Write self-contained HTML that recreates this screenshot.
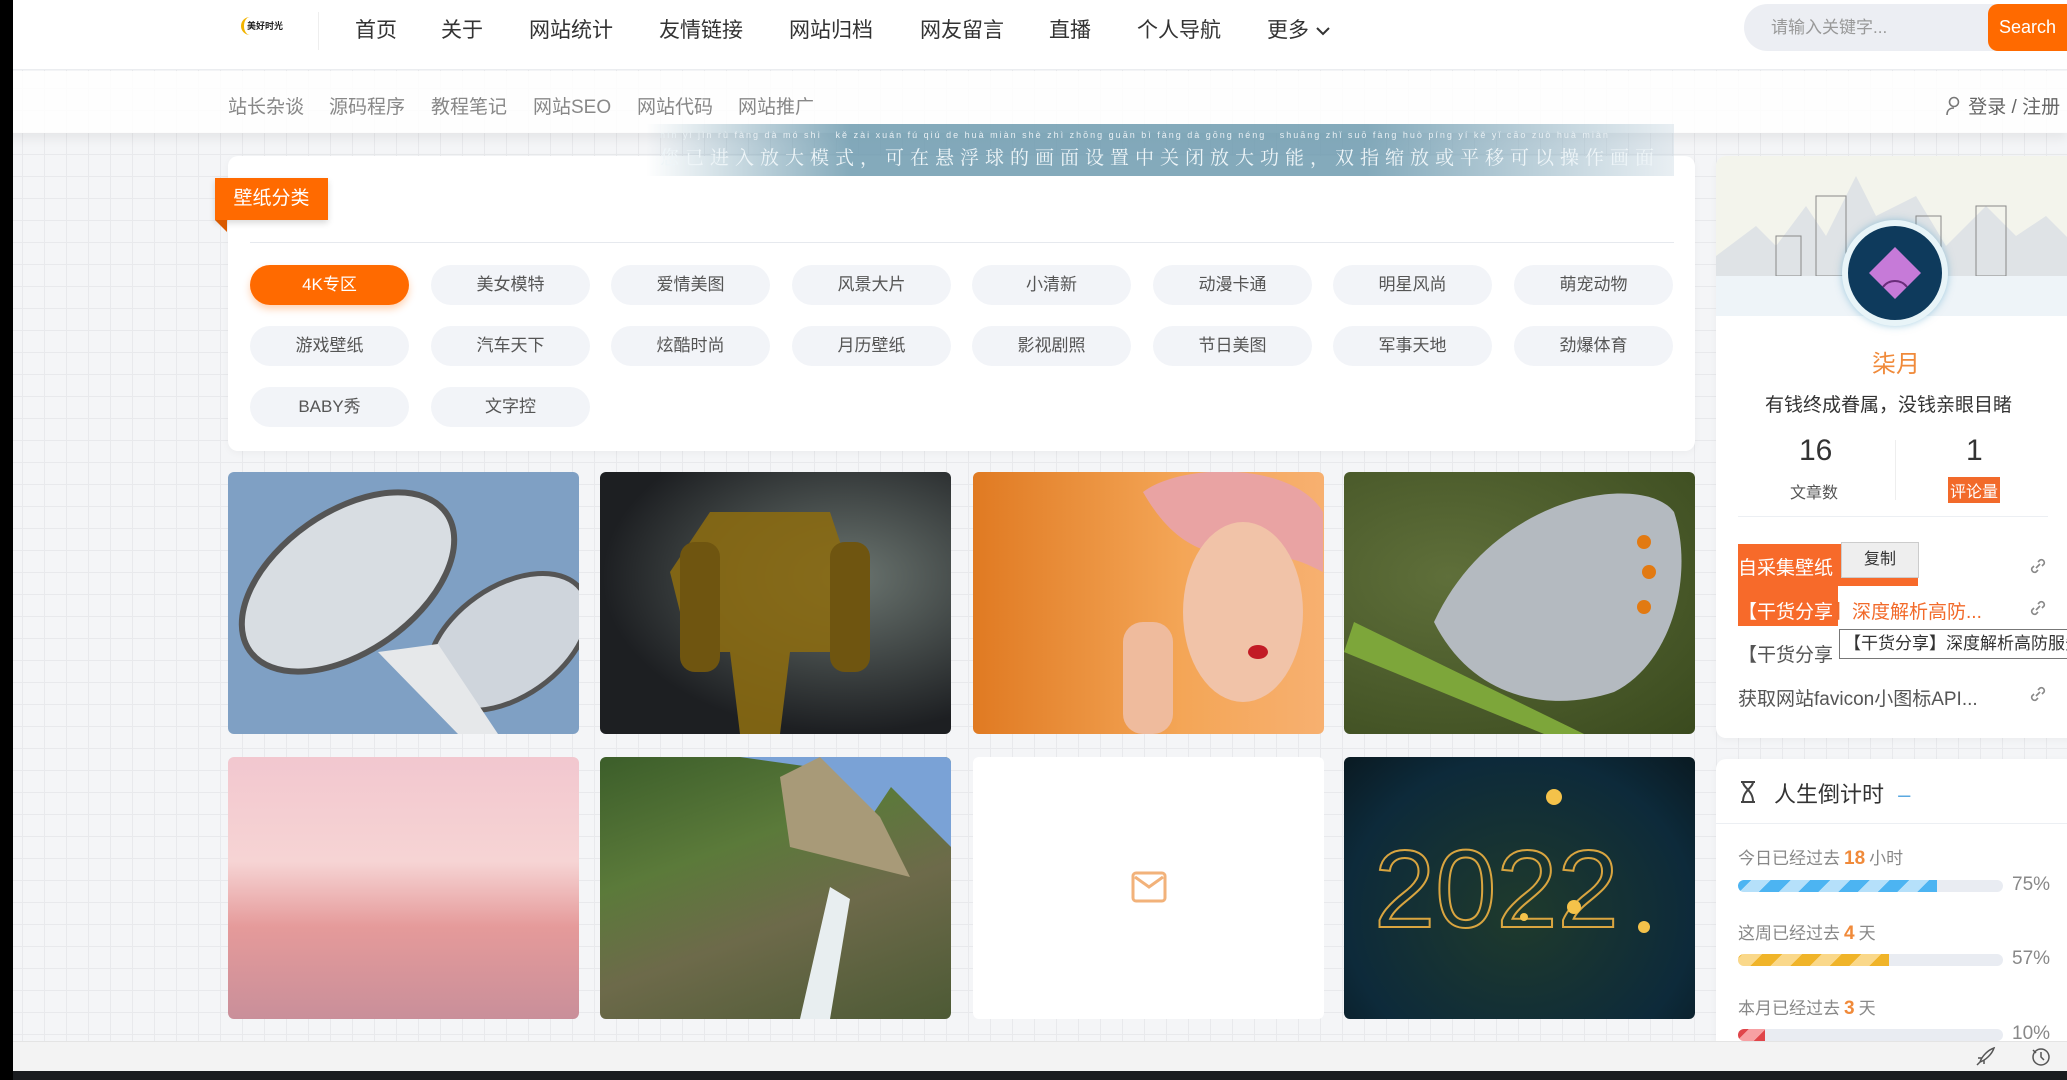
<!DOCTYPE html>
<html><head><meta charset="utf-8"><style>
*{margin:0;padding:0;box-sizing:border-box}
body{width:2067px;height:1080px;overflow:hidden;position:relative;font-family:"Liberation Sans","Noto Sans CJK SC",sans-serif;color:#333;
background-color:#f4f5f7;background-image:linear-gradient(#e8e9ec 1px,transparent 1px),linear-gradient(90deg,#e8e9ec 1px,transparent 1px);background-size:22px 22px}
.a{position:absolute}
.hdr{left:0;top:0;width:2067px;height:70px;background:#fff;border-bottom:1px solid #eceef1}
.nav{top:14px;font-size:21px;color:#333}
.sub{left:0;top:71px;width:2067px;height:62px;background:rgba(255,255,255,.85);box-shadow:0 6px 10px rgba(0,0,0,.06)}
.subi{top:92px;font-size:19px;color:#888}
.card{background:#fff;border-radius:10px;box-shadow:0 2px 8px rgba(0,0,0,.04)}
.pill{width:159px;height:40px;border-radius:20px;background:#f2f4f8;color:#555;font-size:17px;text-align:center;line-height:40px}
.img{width:351px;height:262px;border-radius:6px;overflow:hidden}
.li{left:1738px;font-size:19px;color:#555;white-space:nowrap}
.lk{left:2028px;width:20px;height:20px}
.bar{left:1738px;width:265px;height:12px;border-radius:6px;background:#e9ecf2;overflow:hidden}
.lab{left:1738px;font-size:17px;color:#888}
.lab b{color:#f08a3a;font-weight:bold;font-size:19px;margin:0 4px}
.pct{left:2012px;font-size:19px;color:#888}
</style></head><body>
<div class="a" style="left:0;top:0;width:13px;height:1080px;background:#000;z-index:9"></div>
<div class="a hdr"></div>
<div class="a" style="left:241px;top:17px;width:48px;height:18px;border-radius:9px;border-left:3px solid #f2b400;font-size:9px;font-weight:bold;line-height:18px;padding-left:3px;color:#222;white-space:nowrap;overflow:hidden">美好时光</div>
<div class="a" style="left:318px;top:12px;width:1px;height:38px;background:#eee"></div>
<div class="a nav" style="left:355px">首页</div>
<div class="a nav" style="left:441px">关于</div>
<div class="a nav" style="left:529px">网站统计</div>
<div class="a nav" style="left:659px">友情链接</div>
<div class="a nav" style="left:789px">网站归档</div>
<div class="a nav" style="left:920px">网友留言</div>
<div class="a nav" style="left:1049px">直播</div>
<div class="a nav" style="left:1137px">个人导航</div>
<div class="a nav" style="left:1267px">更多 <svg width="16" height="12" viewBox="0 0 16 12"><path d="M2 3l6 6 6-6" stroke="#333" stroke-width="2" fill="none"/></svg></div>
<div class="a" style="left:1744px;top:4px;width:260px;height:47px;border-radius:24px 0 0 24px;background:#eceef3;font-size:17px;color:#999;line-height:47px;padding-left:27px">请输入关键字...</div>
<div class="a" style="left:1988px;top:4px;width:79px;height:47px;background:#ff6a00;color:#fff;font-size:18px;line-height:47px;text-align:center;border-radius:10px 0 0 10px">Search</div>
<div class="a sub"></div>
<div class="a subi" style="left:228px">站长杂谈</div>
<div class="a subi" style="left:329px">源码程序</div>
<div class="a subi" style="left:431px">教程笔记</div>
<div class="a subi" style="left:533px">网站SEO</div>
<div class="a subi" style="left:637px">网站代码</div>
<div class="a subi" style="left:738px">网站推广</div>
<div class="a subi" style="left:1945px;color:#666"><svg width="18" height="20" viewBox="0 0 18 20" style="vertical-align:-3px"><circle cx="9" cy="6" r="4.5" stroke="#777" stroke-width="1.6" fill="none"/><path d="M2 19c0-5 3-7 7-7" stroke="#777" stroke-width="1.6" fill="none"/></svg> 登录 / 注册</div>

<div class="a card" style="left:228px;top:156px;width:1467px;height:295px"></div>
<div class="a" style="left:646px;top:124px;width:1028px;height:52px;background:linear-gradient(90deg,rgba(120,160,180,0),rgba(110,155,175,.85) 20%,rgba(110,155,175,.85) 70%,rgba(200,215,225,.4));"></div>
<div class="a" style="left:660px;top:130px;font-size:9px;color:#e8f0f4;letter-spacing:2px;white-space:nowrap">nín yǐ jìn rù fàng dà mó shì &nbsp; kě zài xuán fú qiú de huà miàn shè zhì zhōng guān bì fàng dà gōng néng &nbsp; shuāng zhǐ suō fàng huò píng yí kě yǐ cāo zuò huà miàn</div>
<div class="a" style="left:660px;top:143px;font-size:19px;color:#eef5f8;letter-spacing:6px;white-space:nowrap;font-family:'Noto Serif CJK SC',serif">您已进入放大模式，可在悬浮球的画面设置中关闭放大功能，双指缩放或平移可以操作画面</div>
<div class="a" style="left:215px;top:178px;width:113px;height:42px;background:#ff6a00;color:#fff;font-size:19px;line-height:42px;text-align:center;box-shadow:0 3px 6px rgba(0,0,0,.15)">壁纸分类</div>
<div class="a" style="left:215px;top:220px;width:0;height:0;border-top:12px solid #d95a00;border-left:12px solid transparent"></div>
<div class="a" style="left:250px;top:242px;width:1424px;height:1px;background:#e6e9ee"></div>

<div class="a pill" style="left:250px;top:265px;background:#ff6a00;color:#fff;box-shadow:0 4px 8px rgba(255,106,0,.3)">4K专区</div>
<div class="a pill" style="left:431px;top:265px">美女模特</div>
<div class="a pill" style="left:611px;top:265px">爱情美图</div>
<div class="a pill" style="left:792px;top:265px">风景大片</div>
<div class="a pill" style="left:972px;top:265px">小清新</div>
<div class="a pill" style="left:1153px;top:265px">动漫卡通</div>
<div class="a pill" style="left:1333px;top:265px">明星风尚</div>
<div class="a pill" style="left:1514px;top:265px">萌宠动物</div>
<div class="a pill" style="left:250px;top:326px">游戏壁纸</div>
<div class="a pill" style="left:431px;top:326px">汽车天下</div>
<div class="a pill" style="left:611px;top:326px">炫酷时尚</div>
<div class="a pill" style="left:792px;top:326px">月历壁纸</div>
<div class="a pill" style="left:972px;top:326px">影视剧照</div>
<div class="a pill" style="left:1153px;top:326px">节日美图</div>
<div class="a pill" style="left:1333px;top:326px">军事天地</div>
<div class="a pill" style="left:1514px;top:326px">劲爆体育</div>
<div class="a pill" style="left:250px;top:387px">BABY秀</div>
<div class="a pill" style="left:431px;top:387px">文字控</div>

<div class="a img" style="left:228px;top:472px;background:#7fa0c4">
<svg width="351" height="262"><ellipse cx="120" cy="110" rx="120" ry="70" transform="rotate(-35 120 110)" fill="#d8dde2" stroke="#555" stroke-width="6"/><ellipse cx="280" cy="170" rx="90" ry="55" transform="rotate(-35 280 170)" fill="#cfd5dc" stroke="#555" stroke-width="5"/><path d="M150 180l80 82h40l-60-90z" fill="#e6e8ea"/></svg></div>
<div class="a img" style="left:600px;top:472px;background:radial-gradient(ellipse at 70% 40%,#6b7570,#1d1f22 70%)">
<svg width="351" height="262"><path d="M110 40h120l20 60-20 80h-40l-10 82h-40l-10-82h-40l-20-80z" fill="#8a6a12" opacity=".9"/><rect x="80" y="70" width="40" height="130" rx="15" fill="#6f5510"/><rect x="230" y="70" width="40" height="130" rx="15" fill="#6f5510"/></svg></div>
<div class="a img" style="left:973px;top:472px;background:linear-gradient(90deg,#e07a22,#f4a657 60%,#f7b070)">
<svg width="351" height="262"><path d="M170 20c40-30 150-30 180 20v60c-20-10-40-20-60-10-40-10-80 0-120-70z" fill="#e9a3a3"/><ellipse cx="270" cy="140" rx="60" ry="90" fill="#f1c3a8"/><rect x="150" y="150" width="50" height="112" rx="20" fill="#efbb9d"/><ellipse cx="285" cy="180" rx="10" ry="7" fill="#c21b25"/></svg></div>
<div class="a img" style="left:1344px;top:472px;background:radial-gradient(ellipse at 30% 40%,#5f6f3a,#3a4a1e)">
<svg width="351" height="262"><path d="M90 150C150 20 300 0 330 40c20 60 0 150-60 180-60 20-140 10-180-70z" fill="#b4bac0"/><path d="M0 180L200 262h40L10 150z" fill="#7da63a"/><g fill="#e27a12"><circle cx="300" cy="70" r="7"/><circle cx="305" cy="100" r="7"/><circle cx="300" cy="135" r="7"/></g></svg></div>
<div class="a img" style="left:228px;top:757px;background:linear-gradient(180deg,#f2c7cf,#f6d4d4 40%,#e59a9a 65%,#c98f9a)"></div>
<div class="a img" style="left:600px;top:757px;background:linear-gradient(160deg,#3c5e2a 0%,#5b7a3a 35%,#6d6a4a 60%,#4d5a35)">
<svg width="351" height="262"><path d="M140 0h211v90l-60-60-40 60-40-80z" fill="#7aa2d6"/><path d="M180 20l40-20 60 60 30 60-120-30z" fill="#a89a78"/><path d="M230 130l-30 132h30l20-120z" fill="#e8eef0"/></svg></div>
<div class="a img" style="left:973px;top:757px;background:#fff">
<svg width="351" height="262"><rect x="160" y="116" width="32" height="28" rx="3" fill="none" stroke="#f2b27a" stroke-width="3"/><path d="M162 120l14 10 14-10" stroke="#f2b27a" stroke-width="3" fill="none"/></svg></div>
<div class="a img" style="left:1344px;top:757px;background:radial-gradient(ellipse at 50% 60%,#1f3a2c,#0d2a3a 70%,#0a1a22)">
<svg width="351" height="262"><text x="30" y="170" font-size="110" font-family="Liberation Sans" fill="none" stroke="#d9a540" stroke-width="2">2022</text><g fill="#f4c24a"><circle cx="210" cy="40" r="8"/><circle cx="230" cy="150" r="7"/><circle cx="300" cy="170" r="6"/><circle cx="180" cy="160" r="4"/></g></svg></div>

<div class="a card" style="left:1716px;top:156px;width:360px;height:582px;overflow:hidden">
<svg width="360" height="160" style="position:absolute;left:0;top:0"><rect width="360" height="160" fill="#f3f4ec"/><path d="M0 100l40-30 20 20 30-40 20 30 30-60 20 40 40-20 30 50 40-40 30 30 30-20 30 30v80H0z" fill="#dfe3e6"/><g fill="none" stroke="#888" stroke-width="1"><rect x="100" y="40" width="30" height="80"/><rect x="200" y="60" width="25" height="60"/><rect x="260" y="50" width="30" height="70"/><rect x="60" y="80" width="25" height="40"/></g><rect y="120" width="360" height="40" fill="#eef4f8"/></svg>
</div>
<div class="a" style="left:1842px;top:220px;width:106px;height:106px;border-radius:50%;background:#0e3a5c;border:6px solid #e8f4f8;box-shadow:0 0 8px rgba(80,160,200,.5)"></div>
<svg class="a" style="left:1865px;top:243px" width="60" height="60"><path d="M30 4L56 30 30 56 4 30z" fill="#c67ad8"/><path d="M18 44c6-8 18-8 24 0" stroke="#6a2d7a" stroke-width="2" fill="none"/></svg>
<div class="a" style="left:1872px;top:344px;font-size:24px;color:#f08a3a">柒月</div>
<div class="a" style="left:1765px;top:390px;font-size:19px;color:#333">有钱终成眷属，没钱亲眼目睹</div>
<div class="a" style="left:1799px;top:434px;font-size:30px;color:#333">16</div>
<div class="a" style="left:1790px;top:479px;font-size:16px;color:#555">文章数</div>
<div class="a" style="left:1895px;top:440px;width:1px;height:60px;background:#eee"></div>
<div class="a" style="left:1966px;top:434px;font-size:30px;color:#333">1</div>
<div class="a" style="left:1948px;top:477px;font-size:16px;color:#fff;background:#f26a2a;padding:1px 2px">评论量</div>
<div class="a" style="left:1738px;top:516px;width:310px;height:1px;background:#eceff3"></div>
<div class="a" style="left:1738px;top:544px;width:180px;height:42px;background:#f76a2a"></div>
<div class="a" style="left:1738px;top:586px;width:100px;height:40px;background:#f76a2a"></div>
<div class="a li" style="top:553px;color:#fff">自采集壁纸</div>
<div class="a" style="left:1841px;top:542px;width:78px;height:36px;background:#eee;border:1px solid #ccc;font-size:16px;text-align:center;line-height:34px;color:#333">复制</div>
<div class="a li" style="top:597px;color:#fff">【干货分享<span style="color:#f26a2a">】深度解析高防...</span></div>
<div class="a li" style="top:640px">【干货分享</div>
<div class="a" style="left:1839px;top:629px;width:240px;height:30px;background:#fff;border:1px solid #777;font-size:17px;line-height:28px;padding-left:4px;white-space:nowrap;overflow:hidden">【干货分享】深度解析高防服务器</div>
<div class="a li" style="top:684px">获取网站favicon小图标API...</div>
<svg class="a lk" style="top:556px" viewBox="0 0 20 20"><path d="M8 12l4-4M6 10l-2 2a3 3 0 004 4l2-2M14 10l2-2a3 3 0 00-4-4l-2 2" stroke="#888" stroke-width="1.6" fill="none"/></svg>
<svg class="a lk" style="top:598px" viewBox="0 0 20 20"><path d="M8 12l4-4M6 10l-2 2a3 3 0 004 4l2-2M14 10l2-2a3 3 0 00-4-4l-2 2" stroke="#888" stroke-width="1.6" fill="none"/></svg>
<svg class="a lk" style="top:684px" viewBox="0 0 20 20"><path d="M8 12l4-4M6 10l-2 2a3 3 0 004 4l2-2M14 10l2-2a3 3 0 00-4-4l-2 2" stroke="#888" stroke-width="1.6" fill="none"/></svg>

<div class="a card" style="left:1716px;top:759px;width:360px;height:300px"></div>
<div class="a" style="left:1716px;top:823px;width:351px;height:1px;background:#eceff3"></div>
<svg class="a" style="left:1738px;top:780px" width="20" height="24" viewBox="0 0 20 24"><path d="M3 2h14M3 22h14M5 2c0 6 10 8 10 20M15 2c0 6-10 8-10 20" stroke="#444" stroke-width="2" fill="none"/></svg>
<div class="a" style="left:1774px;top:777px;font-size:22px;color:#333">人生倒计时 <span style="color:#5aa8e0;margin-left:8px">–</span></div>
<div class="a lab" style="top:844px">今日已经过去<b>18</b>小时</div>
<div class="a bar" style="top:880px"><div style="width:75%;height:100%;background:repeating-linear-gradient(-45deg,#4cb4f2 0 14px,#b5e0fa 14px 28px)"></div></div>
<div class="a pct" style="top:874px">75%</div>
<div class="a lab" style="top:919px">这周已经过去<b>4</b>天</div>
<div class="a bar" style="top:954px"><div style="width:57%;height:100%;background:repeating-linear-gradient(-45deg,#f0b429 0 14px,#fad88a 14px 28px)"></div></div>
<div class="a pct" style="top:948px">57%</div>
<div class="a lab" style="top:994px">本月已经过去<b>3</b>天</div>
<div class="a bar" style="top:1029px"><div style="width:10%;height:100%;background:repeating-linear-gradient(-45deg,#e0454a 0 8px,#f7a0a3 8px 20px)"></div></div>
<div class="a pct" style="top:1023px">10%</div>

<div class="a" style="left:0;top:1041px;width:2067px;height:30px;background:#f3f3f3;border-top:1px solid #e4e4e4"></div>
<svg class="a" style="left:1974px;top:1046px" width="22" height="22" viewBox="0 0 22 22"><path d="M6 16c2-6 8-12 14-14-2 6-8 12-14 14zM4 12l4 0M10 18v-4M3 19l3-3" stroke="#555" stroke-width="1.5" fill="none"/></svg>
<svg class="a" style="left:2030px;top:1046px" width="22" height="22" viewBox="0 0 22 22"><circle cx="11" cy="11" r="8" stroke="#555" stroke-width="1.5" fill="none"/><path d="M11 6v5l3 3M3 4l3 3" stroke="#555" stroke-width="1.5" fill="none"/></svg>
<div class="a" style="left:0;top:1071px;width:2067px;height:9px;background:#1a1c1f"></div>
</body></html>
